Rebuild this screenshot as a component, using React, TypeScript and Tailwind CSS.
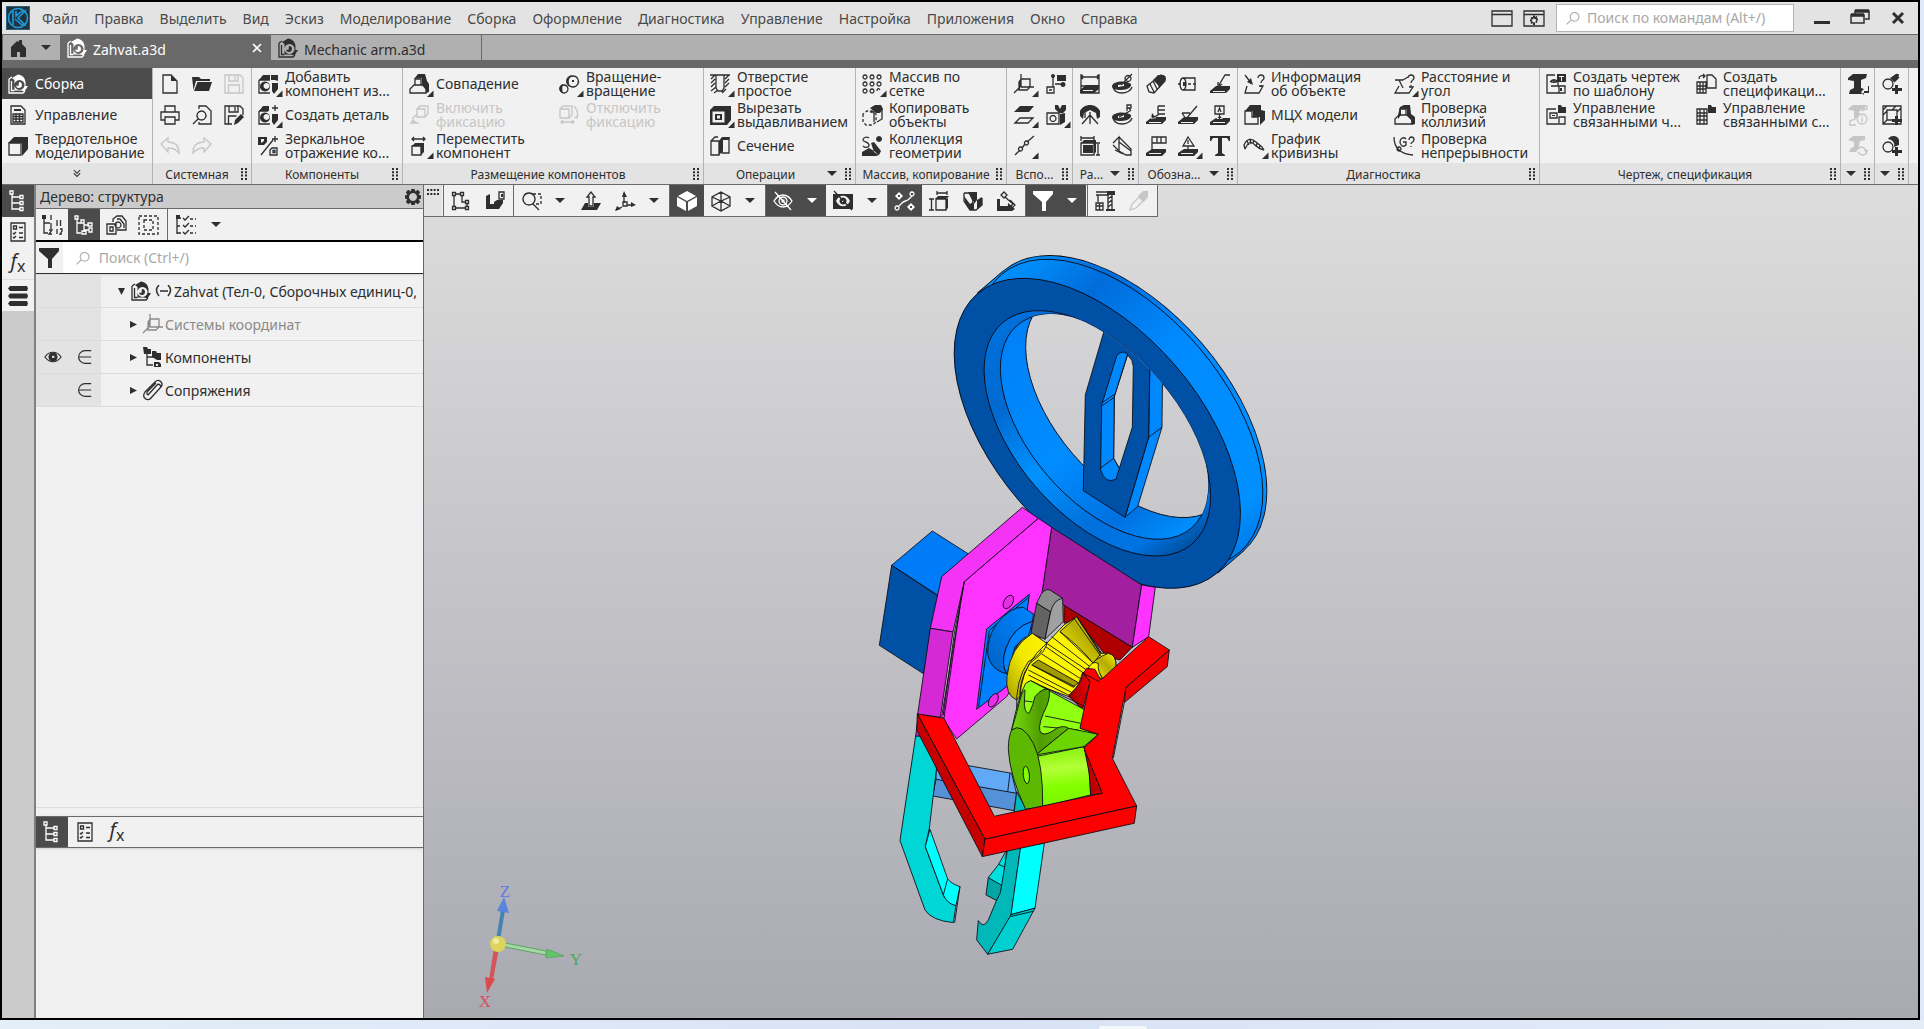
import type { ReactNode } from 'react'
import clsx from 'clsx'

type Glyph = { s?: string; f?: string; d?: string }

// Glyphs are drawn on a 20x20 grid: s = stroked, f = filled (even-odd), d = dashed
const glyphs = {
  assembly: {
    s: 'M1 5v14h14l2-2 M1 5l3-2 M3.500 7v9.500h3',
    f: 'M4 4l6-3.500c4 .5 7 3 7.500 7.500v4l2.500 0-3.500 5.500-3.500-1H6.500V6z M11.500 6a5 5 0 1 0 .01 0z M11 8a3 3 0 1 1-3 3.500l2.500.5z',
  },
  sheet: { s: 'M3 1h10l4 4v14H3z M5 9h10v8H5z M5 11.500h10M5 14h10M8 9v8M11.500 9v8', f: 'M6 4h7v2H6z' },
  solid: { s: 'M1 7h12v12H1z', f: 'M0 7l6-6h14v12l-6 7V7z' },
  doc: { s: 'M3 1h8l6 6v12H3z', f: 'M11 1l6 6h-6z' },
  open: { f: 'M0 3h7l2 2h9v2H4L1.500 16z M5.500 8H20l-3 9H2z' },
  save: { s: 'M1 1h15l3 3v15H1z M5 1v6h9V1 M11 2v4 M4.500 19v-8h11v8' },
  print: { s: 'M5 7V1h10v6 M5 15H1V7h18v8h-4 M5 12h10v7H5z' },
  preview: { s: 'M7 4V1h7l5 5v13H7v-2 M9.500 6a4.500 4.500 0 1 0 .01 0z M6 14l-5 5' },
  saveAs: { s: 'M8 19H1V1h15l3 3v6 M5 1v6h9V1 M11 2v4 M4.500 19v-8h8', f: 'M10 20l1-5 6-6 3 3-6 6z' },
  undo: { s: 'M1 8l7-6v4c7 0 11 4 11 11-3-4-6-5-11-5v4z' },
  redo: { s: 'M19 8l-7-6v4c-7 0-11 4-11 11 3-4 6-5 11-5v4z' },
  addPart: {
    s: 'M1 6h11 M1 6v13h11',
    f: 'M1 6l4-5h7v5z M13 1h7v6l-3-1h-4z M7 7.500a5 5 0 1 0 .01 0z M8.500 9a3 3 0 1 0 .01 0z M14 9h6v6l-4 5-2-3z',
  },
  newPart: {
    s: 'M1 6h9 M1 6v13h11 M17 0v6M14 3h6',
    f: 'M1 6l4-5h6v5z M7 7.500a5 5 0 1 0 .01 0z M8.500 9a3 3 0 1 0 .01 0z M14 9h6v6l-4 5-2-3z',
  },
  mirror: { s: 'M3 19L15 4 M17 0v6M14 3h6 M12 19v-5l2-2h5v7z M15 14.500h2v2h-2z', f: 'M0 1h9v5L6 9H0z M3 3v4l3-2V3z' },
  mate: { s: 'M1 19v-4l4-4h9l3 4v4z M6 11V5h6v6', f: 'M5 5l4-5h7l2 7 2 3v8l-3 1v-4l-4-4V4z' },
  fix: { s: 'M8 4h8v8H8z M8 4l3-3h8v8l-3 3 M8 9L4 13v2 M1 18h9 M2 18l2-3 3 3' },
  unfix: { s: 'M1 4h9v9H1z M1 4l3-3h9v9l-3 3 M15 1q5 5 3 11 M15 12l3 1 1-3 M2 17h13 M4 15l-2 2 2 2 M13 15l2 2-2 2' },
  move: { s: 'M3 3h13 M5 1L3 3l2 2 M14 1l2 2-2 2 M3 10h9v9H3z', f: 'M3 10l3-3h9v9l-3 3v-9z' },
  rotate: { s: 'M14 2a5.500 5.500 0 1 0 .01 0z M5 11a4 4 0 1 0 .01 0z', f: 'M13 1c-7 1-8 9-2 12-2-4-2-9 2-12z M4 10c-5 1-5 8 0 9-1-3-1-6 0-9z M13 6h2v2h-2z' },
  hole: { s: 'M0 1h20 M6 1v13l2 3h4l2-3V1 M1 5l4-4 M1 9l4-4 M1 13l4-4 M1 17l5-4 M4 19l4-3 M15 5l4-4 M15 9l4-4 M15 13l4-4 M12 19l4-4' },
  cut: { f: 'M0 5l4-4h17v14l-4 5H0z M2.500 6.500v11h12v-11z M5 9h7v6H5z M7 10.500v3h3v-3z' },
  section: { s: 'M1 5h8v14H1z M1 5l4-4h3 M12 3h7v14h-7z', f: 'M9 5l3-4h8l-1 3h-6v11l-4 4z' },
  pattern: { s: 'M3 1a2 2 0 1 0 .01 0z M10 1a2 2 0 1 0 .01 0z M17 1a2 2 0 1 0 .01 0z M3 8a2 2 0 1 0 .01 0z M10 8a2 2 0 1 0 .01 0z M17 8a2 2 0 1 0 .01 0z M3 15a2 2 0 1 0 .01 0z M10 15a2 2 0 1 0 .01 0z M15 17c0-3 2-3 3-1' },
  copy: { d: 'M1 9v8l3 3h6l4-3V9l-4-3H5z', s: 'M20 4v10l-5 3 M8 7h4v10', f: 'M8 3l5-3h6l2 4-3 4h-4z' },
  collect: { s: 'M7 2C4 0 1 2 1 4s6 2 6 5-4 3-6 1', f: 'M17 0a3 3 0 1 0 .01 0z M9 7l3-1 7 9-2 4-5-3z M0 16l7-4 5 3 5 4-3 1H0z' },
  plane: { s: 'M7 5h9v8l-3 3H5z M7 0v12L0 19 M7 13h13 M7 5l-2 3v8' },
  localCs: { s: 'M1 13h7v6H1z M7 1v12 M9 10h8 M3 16h3', f: 'M11 1h9v6h-9z M7 0a2 2 0 1 0 .01 0z M17 8a2.500 2.500 0 1 0 .01 0z' },
  parallel: { s: 'M1 18l5-5h13l-5 5z', f: 'M0 7l6-6h14l-5 6z' },
  camera: { s: 'M1 8h12v11H1z M7 10.500a3 3 0 1 0 .01 0z', f: 'M9 0h3l2 4 2-4h4v5l-3 3h-4L9 4z M14 9l5-1v9l-5 3z' },
  points: { s: 'M1 19l5-5 M8 12l3-4 M13 6l7-6 M6.500 11a2 2 0 1 0 .01 0z M12.500 5a2 2 0 1 0 .01 0z' },
  dim: { s: 'M1 0v19h18V0 M1 3h18 M3 1L1 3l2 2 M17 1l2 2-2 2 M1 12h12', f: 'M0 16l6-5h13v4l-5 4H0z M3 16v1h10v-1z' },
  dia: { s: 'M1 13c1 4 5 6 9 6s9-2 10-6 M16 1.500a3 3 0 1 0 .01 0z M9 11L20 0', f: 'M0 12c1-5 14-6 19-2 1 3-4 6-10 6-5 0-9-1-9-4z M6 11v2l6-1v-2z' },
  angle: { s: 'M2 19L10 10l8 9 M10 7v12 M2 6h3v7', f: 'M0 6C4-2 16-2 20 6v6l-3 2-1-6-6-3-6 3-1 6-3-3z' },
  radius: { s: 'M1 13c1 4 5 6 9 6s9-2 10-6 M7 12l11-6 M15 6V0h4v3h-4 M17 3l2 3', f: 'M0 12c1-5 14-6 19-2 1 3-4 6-10 6-5 0-9-1-9-4z M6 11v2l6-1v-2z' },
  dimBox: { s: 'M1 7h13v12H1z M1 0v5 M14 0v5 M1 2h13 M16 7h4 M18 8v11 M16 19h4 M7 12v4h5v-4', f: 'M1 7l3-3h12v12l-2 2V7z M3 9h10v8H3z' },
  leaderR: { s: 'M1 7l6-6v14L1 9 M7 1l12 12v6h-5L7 15 M7 6l12 9 M3 14l8 4' },
  thread: { s: 'M1 12l2 6 5 1L19 7l0-4-4-2z M4 10l4 8 M7 7l4 8', f: 'M7 6l5-5 6 0 2 4-7 9-1-3z' },
  axis: { s: 'M5 4h12v12H5 M5 4a3 6 0 1 0 .01 0z', d: 'M0 10h20', f: 'M5 8h3v4H5z' },
  leader: { s: 'M20 1h-5L9 11 M8 8v5l4-3', f: 'M0 17l6-5h14v3l-4 4H0z M3 17v1h12v-1z' },
  weld: { s: 'M12 1h7 M12 5h7 M12 9h7 M12 1v9L6 13', f: 'M0 17l6-5h14v3l-4 4H0z M3 17v1h12v-1z M5 14l1-6 4 5z' },
  rough: { s: 'M4 8l4 6 11-13 M4 8h8', f: 'M0 17l6-5h14v3l-4 4H0z M3 17v1h12v-1z' },
  datum: { s: 'M5 1h9v8H5z M9.500 9v6 M8 7l1.500-4L11 7', f: 'M0 17l6-4h14v3l-4 4H0z M3 17v1h12v-1z M6 14h7l-3-3z' },
  tolerance: { s: 'M6 1h14v6H6z M11 1v6 M15 1v6 M6 7v8', f: 'M0 17l6-4h14v3l-4 4H0z M3 17v1h12v-1z' },
  mark: { s: 'M10 1l6 9H5z M10 4v4 M10 10v4', f: 'M0 17l6-4h14v3l-4 4H0z M3 17v1h12v-1z' },
  text: { f: 'M0 0h20v5h-1l-2-3h-5v15l3 2v1H5v-1l3-2V2H3L1 5H0z' },
  info: { s: 'M1 1l6 8 M3 12L1 19h14l4-7h-4 M14 4c0-4 6-4 6 0 0 2-3 2-3 5 M17 11v2', f: 'M9 11L3 8l4-4z' },
  mass: { s: 'M1 6h7v6h6v7H1z', f: 'M1 6l5-6h11v5l4 1v9l-5 5v-8H9V6z' },
  curvature: { s: 'M1 13c4-8 6-8 10-4s5 4 9 5 M1 13l-1-4c3-7 8-7 12-3l6 5 2 3 M3 5l2 4 M6 3l1 5 M10 4l-1 4 M13 7l-1 4 M16 9l-1 4' },
  measure: { s: 'M1 6h8 M5 6l4 8 M9 6l5-3 M5 12L1 19h14l4-6h-4 M14 4c0-4 6-4 6 0 0 2-3 2-3 5 M17 11v2' },
  collide: { s: 'M1 19v-5l4-4h9l4 4v5z M6 10V4h6v6', f: 'M4 10l2-8 4-2h6l1 9 4 3v7l-3 1-1-5-4-4V4H7v6l-3 4z' },
  gcheck: { s: 'M0 1c0 10 6 17 19 18 M12 3C9 0 6 3 6 6s3 6 6 3V6H9 M15 4c0-4 5-4 5 0 0 2-3 2-3 4 M17 10v1 M5 11a2 2 0 1 0 .01 0z' },
  drawing: { s: 'M9 1H1v18h12 M13 12h6v7h-6z M4 8c2-3 6-3 8 0v4H5 M5 8h6 M8 5v4', f: 'M11 0h9v8h-9z M13 2v1h2v4h1V3h2V2z M14 14h2v3h-2z' },
  drawingCtl: { s: 'M10 4H1v15h18v-7h-6v6 M4 8h7v5H4z', f: 'M12 0h3l1 2h4v6h-8z M6 10h3v1H6z' },
  spec: { s: 'M11 1h5l4 4v9h-9z M1 8h9v11H1z M1 12h9 M1 15h9 M4 8v11 M7 8v11 M3 5c0-3 2-4 6-3 M7 0l2 2-2 2' },
  specCtl: { s: 'M1 4h10v15H1z M1 8h10 M1 11h10 M1 15h10 M4 4v15 M8 4v15', f: 'M12 0h3l1 2h4v6h-8z' },
  beam: { f: 'M0 4l5-4h14l-1 4-5 2v8l3 1v4l-3 1H1l1-4 4-2V7L0 6z M20 12v5h-4l0-2-3 3 3 3v-2h5v-7z' },
  beamInfo: { s: 'M1 5l4-4h14v3l-6 2 M7 6v8l-5 2v4h6 M14 9a5 5 0 1 0 .01 0z M14 13v4 M14 11v1', f: 'M0 4l5-4h12v4l-5 1-2 8H6V6z' },
  beamSync: { s: 'M9 14c2-4 6-4 9 0 M19 16c-2 4-6 4-9 0', f: 'M0 4l5-4h12v4l-5 1-2 8-2 3H1l2-4 3-1V6z M16 14h5l-3 3z' },
  addThread: { s: 'M6 5a5 5 0 1 0 .01 0z M10 5l5-5 M12 8l5-5', f: 'M8 4l6-4h3l-1 5-4 3z M13 11h3v3h4v3h-4v3h-3v-3h-3v-3h3z' },
  addHatch: { s: 'M1 1h18v18H1z M5 5h10v10H5z M1 5l4-4 M1 10l4-4 M1 19l4-4 M10 5l4-4 M15 7l4-4', f: 'M13 11h3v3h4v3h-4v3h-3v-3h-3v-3h3z' },
  addRing: { s: 'M6 6a5 5 0 1 0 .01 0z', f: 'M6 3c2-4 10-4 11 1v5l-5 2c1-4-1-7-6-8z M13 11h3v3h4v3h-4v3h-3v-3h-3v-3h3z' },
  tree: { s: 'M4 3v15h8 M4 6h8 M4 12h8 M12 4.500h3v3h-3z M12 10.500h3v3h-3z M12 16.500h3v3h-3z M2 0h3v3H2z' },
  props: { s: 'M3 1h14v18H3z M5.500 4h3v3h-3z M11 5.500h4 M5 11l1 1 2-2 M11 11h4 M5 15l1 1 2-2 M11 15.500h4' },
  menu: { f: 'M2 0h17l1 2.500-1 2.500H2L0 2.500z M2 7.500h17l1 2.500-1 2.500H2L0 10z M2 15h17l1 2.500-1 2.500H2l-2-2.500z' },
  treeNum: { s: 'M2 2v16h4 M2 8h6 M9 0v5 M15 5v6 M18.500 5v6 M15 14v5 M9 8v6 M7 15h3l-3 4h3 M18 14h2v2l-2 3h2', f: 'M0 0h4v4H0z' },
  treeComp: { s: 'M3 3v15h4 M3 8h4 M7 5h3v3H7z M8 16h4v3H8z M10 6v11 M10 10h5 M14 8h4v3h-4z M10 15h5 M15 13h3v4h-3z M1 1h3v3H1z' },
  parts: { s: 'M1 9h9v10H1z M4 12h3v4H4z M7 7V4l4-3h5l4 5v9h-9 M11 4h3l4 5v4 M12 7a3 3 0 1 0 .01 0z' },
  dashed: { d: 'M1 1h19v18H1z M6 5h9v10H6z' },
  checks: { s: 'M2 1v18 M2 3h4 M2 11h3 M2 18h4 M8 3l2 2 4-4 M8 10l2 2 4-4 M8 17l2 2 4-4', d: 'M15 4h6 M15 11h6 M15 18h6', f: 'M1 0h4v4H1z' },
  filter: { f: 'M0 0h20v3l-7 8v9h-4v-9L0 3z' },
  search: { s: 'M12 3a5.500 5.500 0 1 0 .01 0z M8 12l-6 6' },
  gear: { f: 'M8 0h4l1 3 3-2 3 3-2 3 3 1v4l-3 1 2 3-3 3-3-2-1 3H8l-1-3-3 2-3-3 2-3-3-1V8l3-1-2-3 3-3 3 2z M10 5a5 5 0 1 0 .01 0z' },
  comps: { s: 'M4 5v13h6 M4 10h6', f: 'M0 0h4l1 2h3v5H1z M9 4h4l1 2h4v7h-4l-5-3z M11 15h5l2 2v3h-7z M13 17v2h2v-2z' },
  clip: { s: 'M5 15L14 5c2-2 5 1 3 3L8 18c-3 4-10 0-6-6L12 2c4-4 9 1 6 5 M5 15c-2-1-1-3 0-4l8-8' },
  profile: { s: 'M3 5v10 M5 17h9 M16 15v-2 M14 11h-3V5 M9 3H5 M1.500 1.500h3v3h-3z M9.500 1.500h3v3h-3z M14.500 9.500h3v3h-3z M1.500 15.500h3v3h-3z M14.500 15.500h3v3h-3z' },
  sketch: { s: 'M14 1h5v7h-5z', f: 'M1 5l4-2v10h4v-2l3-2h6v3l-4 6H1z M16 3h2v3h-2z' },
  zoomArea: { s: 'M8 2a6 6 0 1 0 .01 0z M12 13l6 6', d: 'M12 3h8v10h-6' },
  normal: { s: 'M10 1L6 6h2v9h4V6h2z', f: 'M0 19l4-7h3v4h6v-4h7l-4 7z' },
  csys: { s: 'M9 12V2 M12 14h7 M7 16l-6 3 M8 11h4v4H8z', f: 'M9 0l3 6H7z M21 14l-5-3v5z M0 20l2-5 4 3z' },
  shaded: { f: 'M10 0l9 5-9 5-9-5z M0 6l9 5v9l-9-5z M20 6l-9 5v9l9-5z' },
  wire: { s: 'M10 1l9 5v9l-9 5-9-5V6z M10 1v9 M1 6l9 4 9-4 M10 10v10 M1 15l9-5 9 5' },
  hide: { s: 'M1 10c5-8 13-8 18 0-5 8-13 8-18 0z M10 6a4 4 0 1 0 .01 0z M2 1l16 18', f: 'M8.500 8.500h3v3h-3z' },
  hideBox: { s: 'M1 0l18 19', f: 'M0 3h20v15H0z M3 10c3 7 11 7 14 0-3-7-11-7-14 0z M10 6.500a3.500 3.500 0 1 0 .01 0z M9 9h2v2H9z' },
  link: { s: 'M4 15l3-3c3-3 4-1 7-4l3-3 M17 1a2 2 0 1 0 .01 0z M2 15a2 2 0 1 0 .01 0z', f: 'M4 1l4 4-4 4-4-4z M3 4v2h2V4z M16 12l4 4-4 4-4-4z M15 15v2h2v-2z' },
  dimFrame: { s: 'M7 8h10v11H7z M8 0v4 M18 0v4 M8 2h10 M0 8h5 M0 19h5 M2.500 8v11', f: 'M17 8l2-2v11l-2 2z M6 8l3-3h11l-2 3z' },
  boxes: { s: 'M1 2h9v11 M1 2v8l6 9h6l6-5V7', f: 'M5 1h9v8l-3 4zM1 5l6 8 4-3v9H7l-5-7z M14 9l5-3v8l-5 4z' },
  tools: { s: 'M4 4l3-3 3 3-3 3z M8 6l8 7-3 3 M13 9l5 5-3 3-4-4', f: 'M0 8h3v7h8v-3l7 6-3 2H0z' },
  crane: { s: 'M1 1h19 M1 4h13 M3 4v7 M1 12h7v7H1z M1 15h7 M4.500 12v7 M13 4v15 M17 1v18 M13 8l4-3 M13 12l4-3 M13 16l4-3', f: 'M11 18h9v2h-9z M12 0h8v4h-8z' },
  dropper: { s: 'M1 19l2-6 7-7 4 4-7 7z', f: 'M9 5l5-5h5v6l-4 5z' },
  layout: { s: 'M0 3h20v15H0z M0 6.500h20' },
  layoutGear: { s: 'M0 3h20v15H0z M0 6.500h20', f: 'M9 7.500h2v1.500l1.500-1 1 1-1 1.500H14v2h-1.500l1 1.500-1 1-1.500-1V17H9v-2l-1.500 1-1-1 1-1.500H6v-2h1.500l-1-1.500 1-1L9 9z M10 10.500a2 2 0 1 0 .01 0z' },
  home: { f: 'M2 9l6-6 2 1V2h3v4l4 4v9h-6v-5H8v5H2z' },
  double: { s: 'M6 5l4 4 4-4 M6 9l4 4 4-4' },
  eye: { s: 'M1 10c5-7 13-7 18 0-5 7-13 7-18 0z', f: 'M10 5a5 5 0 1 0 .01 0z M9 8.500h2.500v2.500H9z' },
  member: { s: 'M18 3h-7a7 7 0 0 0 0 14h7 M4 10h14' },
} satisfies Record<string, Glyph>

type IconName = keyof typeof glyphs

function Icon({ name, more, className = 'size-5' }: { name: IconName; more?: boolean; className?: string }) {
  const glyph: Glyph = glyphs[name]
  return (
    <svg className={clsx('shrink-0 overflow-visible', className)} viewBox="0 0 20 20" fill="none" stroke="currentColor" strokeWidth="1.3" aria-hidden="true">
      {glyph.s && <path d={glyph.s} />}
      {glyph.d && <path d={glyph.d} strokeDasharray="3 2" />}
      {glyph.f && <path d={glyph.f} fill="currentColor" fillRule="evenodd" stroke="none" />}
      {more && <path d="M24.500 16.500v6.500H18z" fill="currentColor" stroke="none" />}
    </svg>
  )
}

function Arrow({ className }: { className?: string }) {
  return <span className={clsx('inline-block h-0 w-0 border-x-5 border-t-5 border-x-transparent border-t-current', className)} />
}

function Grip() {
  return (
    <svg className="h-3 w-[6px] shrink-0" viewBox="0 0 6 12" fill="currentColor" aria-hidden="true">
      <path d="M0 0h2v2H0zM4 0h2v2H4zM0 3.300h2v2H0zM4 3.300h2v2H4zM0 6.600h2v2H0zM4 6.600h2v2H4zM0 10h2v2H0zM4 10h2v2H4z" />
    </svg>
  )
}

type Tool = { icon: IconName; label?: string; more?: boolean; off?: boolean }

const menu = ['Файл', 'Правка', 'Выделить', 'Вид', 'Эскиз', 'Моделирование', 'Сборка', 'Оформление', 'Диагностика', 'Управление', 'Настройка', 'Приложения', 'Окно', 'Справка']

const modes: Tool[] = [
  { icon: 'assembly', label: 'Сборка' },
  { icon: 'sheet', label: 'Управление' },
  { icon: 'solid', label: 'Твердотельное\nмоделирование' },
]

type Group = { title: string; width: string; tools: (Tool | null)[]; arrow?: boolean; iconsOnly?: boolean }

// Tools fill each group column by column, three to a column
const groups: Group[] = [
  {
    title: 'Системная',
    width: 'w-[99px]',
    iconsOnly: true,
    tools: [
      { icon: 'doc', label: 'Создать' }, { icon: 'print', label: 'Печать' }, { icon: 'undo', label: 'Отменить', off: true },
      { icon: 'open', label: 'Открыть' }, { icon: 'preview', label: 'Просмотр' }, { icon: 'redo', label: 'Повторить', off: true },
      { icon: 'save', label: 'Сохранить', off: true }, { icon: 'saveAs', label: 'Сохранить как' },
    ],
  },
  {
    title: 'Компоненты',
    width: 'w-[151px]',
    tools: [
      { icon: 'addPart', label: 'Добавить\nкомпонент из...', more: true },
      { icon: 'newPart', label: 'Создать деталь', more: true },
      { icon: 'mirror', label: 'Зеркальное\nотражение ко...' },
    ],
  },
  {
    title: 'Размещение компонентов',
    width: 'w-[301px]',
    tools: [
      { icon: 'mate', label: 'Совпадение', more: true },
      { icon: 'fix', label: 'Включить\nфиксацию', off: true },
      { icon: 'move', label: 'Переместить\nкомпонент', more: true },
      { icon: 'rotate', label: 'Вращение-\nвращение', more: true },
      { icon: 'unfix', label: 'Отключить\nфиксацию', off: true },
    ],
  },
  {
    title: 'Операции',
    width: 'w-[152px]',
    arrow: true,
    tools: [
      { icon: 'hole', label: 'Отверстие\nпростое', more: true },
      { icon: 'cut', label: 'Вырезать\nвыдавливанием', more: true },
      { icon: 'section', label: 'Сечение' },
    ],
  },
  {
    title: 'Массив, копирование',
    width: 'w-[151px]',
    tools: [
      { icon: 'pattern', label: 'Массив по\nсетке', more: true },
      { icon: 'copy', label: 'Копировать\nобъекты' },
      { icon: 'collect', label: 'Коллекция\nгеометрии' },
    ],
  },
  {
    title: 'Вспо...',
    width: 'w-[66px]',
    iconsOnly: true,
    tools: [
      { icon: 'plane', more: true }, { icon: 'parallel', more: true }, { icon: 'points', more: true },
      { icon: 'localCs' }, { icon: 'camera', more: true },
    ],
  },
  {
    title: 'Ра...',
    width: 'w-[66px]',
    arrow: true,
    iconsOnly: true,
    tools: [{ icon: 'dim' }, { icon: 'angle' }, { icon: 'dimBox' }, { icon: 'dia' }, { icon: 'radius' }, { icon: 'leaderR' }],
  },
  {
    title: 'Обозна...',
    width: 'w-[99px]',
    arrow: true,
    iconsOnly: true,
    tools: [
      { icon: 'thread' }, { icon: 'weld' }, { icon: 'tolerance' },
      { icon: 'axis' }, { icon: 'rough' }, { icon: 'mark', more: true },
      { icon: 'leader' }, { icon: 'datum' }, { icon: 'text' },
    ],
  },
  {
    title: 'Диагностика',
    width: 'w-[302px]',
    tools: [
      { icon: 'info', label: 'Информация\nоб объекте' },
      { icon: 'mass', label: 'МЦХ модели' },
      { icon: 'curvature', label: 'График\nкривизны', more: true },
      { icon: 'measure', label: 'Расстояние и\nугол', more: true },
      { icon: 'collide', label: 'Проверка\nколлизий' },
      { icon: 'gcheck', label: 'Проверка\nнепрерывности' },
    ],
  },
  {
    title: 'Чертеж, спецификация',
    width: 'w-[301px]',
    tools: [
      { icon: 'drawing', label: 'Создать чертеж\nпо шаблону' },
      { icon: 'drawingCtl', label: 'Управление\nсвязанными ч...' },
      null,
      { icon: 'spec', label: 'Создать\nспецификаци...' },
      { icon: 'specCtl', label: 'Управление\nсвязанными с...' },
    ],
  },
  { title: '', width: 'w-[34px]', arrow: true, iconsOnly: true, tools: [{ icon: 'beam' }, { icon: 'beamInfo', off: true }, { icon: 'beamSync', off: true }] },
  { title: '', width: 'w-[34px]', arrow: true, iconsOnly: true, tools: [{ icon: 'addThread' }, { icon: 'addHatch' }, { icon: 'addRing' }] },
]

function RibbonGroup({ group }: { group: Group }) {
  return (
    <section className={clsx('flex shrink-0 flex-col border-r border-[#b4b4b4]', group.width)}>
      <div className={clsx('grid h-[95px] grid-flow-col grid-rows-3 justify-start pb-[2px]', group.iconsOnly ? 'auto-cols-[32px] pl-px' : 'auto-cols-[150px]')}>
        {group.tools.map((tool, index) =>
          tool ? (
            <button
              key={index}
              type="button"
              disabled={tool.off}
              aria-label={tool.label?.replace('\n', ' ') ?? tool.icon}
              className={clsx('flex items-center', group.iconsOnly ? 'justify-center' : 'gap-[7px] pl-[6px]', tool.off ? 'text-[#c6c6c6]' : 'text-[#2e2e2e]')}
            >
              <Icon name={tool.icon} more={tool.more} />
              {!group.iconsOnly && <span className="text-left leading-[14px] whitespace-pre">{tool.label}</span>}
            </button>
          ) : (
            <span key={index} />
          ),
        )}
      </div>
      <footer className="flex flex-1 items-center bg-[#e3e3e3] pr-1 text-xs">
        <span className="flex-1 pt-[2px] text-center whitespace-nowrap">{group.title}</span>
        {group.arrow && <Arrow className={group.title ? 'mr-2' : 'mr-2 -ml-4'} />}
        <Grip />
      </footer>
    </section>
  )
}

function TitleBar() {
  return (
    <header className="flex h-[33px] items-center border-b border-[#6a6a6a] bg-[#e3e3e3] pl-1">
      <svg className="size-6" viewBox="0 0 24 24" fill="none" stroke="#1e9be0" strokeWidth="1.6" aria-hidden="true">
        <path d="M0 0h24v24H0z" fill="#20323c" stroke="#2f6e90" />
        <circle cx="12" cy="12" r="9.500" />
        <path d="M7 5v14 M10 5v5l6-5h3l-7 7 7 7h-3l-7-6" />
      </svg>
      <nav className="flex gap-4 pl-3">
        {menu.map((item) => (
          <button key={item} type="button" className="pt-px whitespace-nowrap text-[#4a4a4a]">
            {item}
          </button>
        ))}
      </nav>
      <div className="ml-auto flex items-center">
        <button type="button" aria-label="Окна" className="mr-3">
          <Icon name="layout" />
        </button>
        <button type="button" aria-label="Настройка окна" className="mr-3">
          <Icon name="layoutGear" />
        </button>
        <label className="flex h-7 w-[238px] items-center gap-1.5 border border-[#b4b4b4] bg-white pl-2 text-[#a8a8a8]">
          <Icon name="search" className="size-4" />
          <input className="w-full outline-none placeholder:text-[#a8a8a8]" placeholder="Поиск по командам (Alt+/)" aria-label="Поиск по командам" />
        </label>
        <button type="button" aria-label="Свернуть" className="ml-5 h-5 w-4">
          <span className="mt-2 block h-[3px] bg-[#2e2e2e]" />
        </button>
        <button type="button" aria-label="Развернуть" className="ml-5">
          <svg className="size-5" viewBox="0 0 20 20" fill="none" stroke="#2e2e2e" strokeWidth="1.500">
            <path d="M1 7h13v8H1z M5 6V3h14v8h-4" />
            <path d="M1 7h13M5 3h14" strokeWidth="3.500" />
          </svg>
        </button>
        <button type="button" aria-label="Закрыть" className="mr-3 ml-5">
          <svg className="size-4" viewBox="0 0 16 16" stroke="#2e2e2e" strokeWidth="3">
            <path d="M3 3l10 10M13 3L3 13" />
          </svg>
        </button>
      </div>
    </header>
  )
}

function DocumentTabs() {
  return (
    <div className="flex h-[33px] items-start border-b-8 border-[#696969] bg-[#b0b0b0]">
      <button type="button" aria-label="Начальная страница" className="flex h-[25px] w-[58px] items-center gap-3 border-l border-[#696969] pl-[6px]">
        <Icon name="home" />
        <Arrow />
      </button>
      <div className="flex h-[25px] w-[211px] items-center bg-[#696969] pr-2 pl-[7px] text-white">
        <button type="button" className="flex flex-1 items-center gap-[6px]">
          <Icon name="assembly" />
          <span className="pt-1">Zahvat.a3d</span>
        </button>
        <button type="button" aria-label="Закрыть вкладку">
          <svg className="size-3" viewBox="0 0 12 12" stroke="currentColor" strokeWidth="1.600">
            <path d="M2 2l8 8M10 2l-8 8" />
          </svg>
        </button>
      </div>
      <button type="button" className="flex h-[25px] w-[211px] items-center gap-[6px] border-r border-[#696969] pl-[7px]">
        <Icon name="assembly" />
        <span className="pt-1">Mechanic arm.a3d</span>
      </button>
    </div>
  )
}

function Ribbon() {
  return (
    <div className="flex h-[117px] overflow-hidden border-b border-[#6a6a6a] bg-[#f1f1f1]">
      <section className="flex w-[151px] shrink-0 flex-col border-r border-[#b4b4b4]">
        <div className="grid h-[95px] grid-rows-3 pb-[2px]">
          {modes.map((mode, index) => (
            <button
              key={mode.label}
              type="button"
              className={clsx('flex items-center gap-[7px] pl-[6px] text-left', index === 0 && 'bg-[#4b4b4b] text-white')}
            >
              <Icon name={mode.icon} />
              <span className="leading-[14px] whitespace-pre">{mode.label}</span>
            </button>
          ))}
        </div>
        <button type="button" aria-label="Ещё наборы" className="flex flex-1 items-center justify-center bg-[#e3e3e3]">
          <Icon name="double" className="size-4" />
        </button>
      </section>
      {groups.map((group, index) => (
        <RibbonGroup key={index} group={group} />
      ))}
      <div className="flex flex-1 items-end">
        <div className="h-[21px] flex-1 bg-[#e3e3e3]" />
      </div>
    </div>
  )
}

function FxLabel() {
  return (
    <span className="pb-1 text-[20px] leading-5 italic">
      f<sub className="text-[16px] not-italic">x</sub>
    </span>
  )
}

function SideStrip() {
  return (
    <nav className="flex w-[34px] shrink-0 flex-col border-r-2 border-[#808080] bg-[#cbcbcb]">
      <button type="button" aria-label="Дерево" className="flex h-8 items-center justify-center bg-[#4b4b4b] text-white">
        <Icon name="tree" />
      </button>
      <button type="button" aria-label="Параметры" className="flex h-[30px] items-center justify-center bg-[#f1f1f1]">
        <Icon name="props" />
      </button>
      <button type="button" aria-label="Переменные" className="flex h-8 items-center justify-center bg-[#f1f1f1]">
        <FxLabel />
      </button>
      <button type="button" aria-label="Меню" className="flex h-8 items-center justify-center border-t border-[#e0e0e0] bg-[#f1f1f1]">
        <Icon name="menu" />
      </button>
    </nav>
  )
}

type Row = { icon: IconName; text: string; root?: boolean; muted?: boolean; eye?: boolean; member?: boolean }

const rows: Row[] = [
  { icon: 'assembly', text: 'Zahvat (Тел-0, Сборочных единиц-0,', root: true },
  { icon: 'plane', text: 'Системы координат', muted: true },
  { icon: 'comps', text: 'Компоненты', eye: true, member: true },
  { icon: 'clip', text: 'Сопряжения', member: true },
]

function TreePanel() {
  return (
    <aside className="flex w-[388px] shrink-0 flex-col border-r border-[#6a6a6a] bg-[#f1f1f1]">
      <header className="flex h-6 items-center justify-between border-b border-[#6a6a6a] bg-[#cbcbcb] pr-[2px] pl-1">
        <h2>Дерево: структура</h2>
        <button type="button" aria-label="Настройка дерева">
          <Icon name="gear" className="size-4" />
        </button>
      </header>
      <div className="flex h-[33px] items-stretch border-b-2 border-black">
        {(['treeNum', 'treeComp', 'parts', 'dashed'] as const).map((name) => (
          <button key={name} type="button" aria-label={name} className={clsx('flex w-8 items-center justify-center', name === 'treeComp' && 'bg-[#4b4b4b] text-white')}>
            <Icon name={name} />
          </button>
        ))}
        <button type="button" aria-label="Состав дерева" className="ml-[3px] flex items-center gap-4 border-l border-[#6a6a6a] pl-[7px]">
          <Icon name="checks" />
          <Arrow />
        </button>
      </div>
      <label className="flex h-8 items-center border-b border-[#2e2e2e] bg-white text-[#a8a8a8] shadow-sm">
        <span className="flex h-full w-8 items-center justify-center bg-[#f1f1f1] text-[#2e2e2e]">
          <Icon name="filter" />
        </span>
        <Icon name="search" className="mr-2 ml-3 size-4" />
        <input className="w-full pt-px outline-none placeholder:text-[#a8a8a8]" placeholder="Поиск (Ctrl+/)" aria-label="Поиск в дереве" />
      </label>
      <ul className="pt-px">
        {rows.map((row) => (
          <li key={row.text} className="flex h-[33px] border-b border-[#dcdcdc]">
            <span className="flex w-[65px] shrink-0 items-center justify-between bg-[#e3e3e3] pr-2 pl-2">
              <span>{row.eye && <Icon name="eye" className="size-[18px]" />}</span>
              <span>{row.member && <Icon name="member" className="size-[18px]" />}</span>
            </span>
            <span className={clsx('flex min-w-0 items-center whitespace-nowrap', row.root ? 'pl-[17px]' : 'pl-[29px]')}>
              <svg className="mr-[6px] size-[7px] shrink-0" viewBox="0 0 7 7" fill="currentColor" aria-hidden="true">
                <path d={row.root ? 'M0 0h7L3.500 7z' : 'M0 0l7 3.500L0 7z'} />
              </svg>
              <Icon name={row.icon} className={clsx('size-5', row.muted && 'text-[#8a8a8a]')} />
              {row.root && (
                <svg className="ml-1 h-3 w-[17px] shrink-0" viewBox="0 0 17 12" fill="none" stroke="currentColor" strokeWidth="1.500" aria-hidden="true">
                  <path d="M4 0q-5 5 0 11M13 0q5 5 0 11M5 6h8" />
                </svg>
              )}
              <span className={clsx('pt-px pl-[2px]', row.muted && 'text-[#8a8a8a]')}>{row.text}</span>
            </span>
          </li>
        ))}
      </ul>
      <div className="mt-auto border-t border-[#dcdcdc] pt-2">
        <div className="flex h-8 items-stretch border-y border-[#6a6a6a] shadow-sm">
          <button type="button" aria-label="Дерево" className="flex w-8 items-center justify-center bg-[#4b4b4b] text-white">
            <Icon name="tree" />
          </button>
          <button type="button" aria-label="Параметры" className="flex w-[33px] items-center justify-center">
            <Icon name="props" />
          </button>
          <button type="button" aria-label="Переменные" className="flex w-8 items-center justify-center">
            <FxLabel />
          </button>
        </div>
        <div className="h-[170px]" />
      </div>
    </aside>
  )
}

function ViewButton({ name, arrow, dark, off }: { name: IconName; arrow?: boolean; dark?: boolean; off?: boolean }) {
  return (
    <button
      type="button"
      aria-label={name}
      className={clsx('flex items-center gap-[14px] pl-[7px]', arrow ? 'w-[60px]' : 'w-[34px]', dark && 'bg-[#4b4b4b] text-white', off && 'text-[#c6c6c6]')}
    >
      <Icon name={name} />
      {arrow && <Arrow />}
    </button>
  )
}

function ViewGroup({ children }: { children: ReactNode }) {
  return <div className="flex border-r border-[#6a6a6a] pr-px">{children}</div>
}

function ViewToolbar() {
  return (
    <div className="relative flex h-8 w-max border-b border-[#6a6a6a] bg-[#f1f1f1]">
      <ViewGroup>
        <span className="flex w-[18px] justify-center bg-[#e3e3e3] pt-1">
          <svg className="h-[6px] w-3" viewBox="0 0 12 6" fill="currentColor" aria-hidden="true">
            <path d="M0 0h2v2H0zM3.300 0h2v2h-2zM6.600 0h2v2h-2zM10 0h2v2h-2zM0 4h2v2H0zM3.300 4h2v2h-2zM6.600 4h2v2h-2zM10 4h2v2h-2z" />
          </svg>
        </span>
      </ViewGroup>
      <ViewGroup>
        <ViewButton name="profile" />
        <ViewButton name="sketch" />
      </ViewGroup>
      <ViewGroup>
        <ViewButton name="zoomArea" arrow />
        <ViewButton name="normal" />
        <ViewButton name="csys" arrow />
      </ViewGroup>
      <ViewGroup>
        <ViewButton name="shaded" dark />
        <ViewButton name="wire" arrow />
      </ViewGroup>
      <ViewGroup>
        <ViewButton name="hide" arrow dark />
        <ViewButton name="hideBox" arrow />
      </ViewGroup>
      <ViewGroup>
        <ViewButton name="link" dark />
        <ViewButton name="dimFrame" />
        <ViewButton name="boxes" />
        <ViewButton name="tools" />
      </ViewGroup>
      <ViewGroup>
        <ViewButton name="filter" arrow dark />
      </ViewGroup>
      <ViewGroup>
        <ViewButton name="crane" />
        <ViewButton name="dropper" off />
      </ViewGroup>
    </div>
  )
}

const frontFace = 'translate(712 580) rotate(49.400)'
const backFace = 'translate(790 513) rotate(49.400)'
const boreFace = 'translate(733 560) rotate(49.400)'
const backBore = 'translate(809 495) rotate(49.400)'

function Handwheel() {
  return (
    <g>
      <clipPath id="body">
        <ellipse rx="552" ry="310" transform={backFace} />
        <ellipse rx="552" ry="310" transform={frontFace} />
        <path d="M352 161L430 94 1150 932 1072 999z" />
      </clipPath>
      <clipPath id="lip">
        <ellipse rx="437" ry="245" transform={frontFace} />
      </clipPath>
      <clipPath id="bore">
        <ellipse rx="401" ry="225" transform={boreFace} />
      </clipPath>
      <mask id="hole" maskUnits="userSpaceOnUse" x="0" y="0" width="1400" height="1200">
        <path d="M0 0h1400v1200H0z" fill="#fff" stroke="none" />
        <g clipPath="url(#lip)">
          <g clipPath="url(#bore)">
            <ellipse rx="401" ry="225" transform={backBore} fill="#000" stroke="none" />
          </g>
        </g>
      </mask>
      <g mask="url(#hole)">
        <ellipse rx="552" ry="310" transform={backFace} strokeWidth="5" />
        <path d="M352 161L430 94M1150 932L1072 999" strokeWidth="5" />
        <g clipPath="url(#body)">
          <path d="M0 0h1400v1200H0z" fill="url(#rim)" stroke="none" />
          <ellipse rx="549" ry="307" transform="translate(782 520) rotate(49.400)" />
        </g>
        <ellipse rx="552" ry="310" transform={frontFace} fill="#0050a5" />
        <g clipPath="url(#lip)">
          <path d="M0 0h1400v1200H0z" fill="url(#groove)" stroke="none" />
          <g clipPath="url(#bore)">
            <path d="M0 0h1400v1200H0z" fill="url(#boreFill)" stroke="none" />
          </g>
          <ellipse rx="401" ry="225" transform={boreFace} />
        </g>
        <ellipse rx="437" ry="245" transform={frontFace} />
      </g>
      <g clipPath="url(#lip)">
        <g clipPath="url(#bore)">
          <ellipse rx="401" ry="225" transform={backBore} />
        </g>
        <path d="M870 360L908 380 906 562 833 800 795 832 866 592z" fill="#0088ff" />
        <path d="M866 592L906 562" />
        <path d="M742 240L870 340 866 592 795 832 670 752 676 465z M803 345Q820 360 820 380L817 562 778 685 761 655 763 470z" fill="#0050a5" fillRule="evenodd" />
        <path d="M725 495L770 348Q785 328 803 342L763 470 761 655 778 685 768 718Q735 733 722 690z" fill="#0088ff" />
        <path d="M727 488L763 463M727 497L763 472M722 684L761 655" />
      </g>
    </g>
  )
}

function Bracket() {
  return (
    <g transform="translate(0 780)">
      <path d="M95 196L217 93 330 165 240 290z" fill="#007cf8" />
      <path d="M95 196L240 292 190 521 58 436z" fill="#0050a5" />
      <path d="M575 82L845 255 817 442 610 315 547 272z" fill="#a2209f" />
      <path d="M845 255L886 262 866 410 817 442z" fill="#ff33ff" />
      <path d="M535 55L575 82 547 272 540 420 440 590 290 717 245 650 313 245z" fill="#ff33ff" />
      <path d="M487 22L535 55 313 245 279 396 211 385 245 230z" fill="#f433f6" />
      <path d="M211 385L279 396 241 652 173 643z" fill="#d32ad6" />
      <path d="M313 245L283 400 250 645M300 320L252 655" />
      <path d="M612 316L817 442 780 480 740 470 650 358 612 370z" fill="#ae0000" />
      <path d="M350 628L380 387 508 283 500 345 520 400 440 560z" fill="#0080ff" />
      <path d="M387 392L506 292M388 392L356 620" />
      <path d="M383 460Q382 410 410 372 450 320 490 322L520 342 518 364Q460 380 438 445 422 490 440 521L425 517Q388 500 383 460z" fill="url(#disc)" />
      <path d="M518 364Q460 380 438 445 422 490 440 521L450 495 465 440 505 408z" fill="#0084ff" />
      <ellipse rx="13" ry="22" transform="translate(445 306) rotate(30)" fill="#e62ee8" />
      <ellipse rx="12" ry="22" transform="translate(400 601) rotate(30)" fill="#e62ee8" />
      <path d="M508 407Q468 420 463 465L475 470 520 410z" fill="#6c6c6c" />
      <path d="M535 300Q550 262 570 270L608 295 572 336 530 310z" fill="#8c8c8c" />
      <path d="M530 310L572 336 555 418 513 400z" fill="#636363" />
      <path d="M572 336Q580 300 608 295L610 365 555 418z" fill="#a0a0a0" />
    </g>
  )
}

function BevelGears() {
  return (
    <g transform="translate(0 780)">
      <path d="M517 400Q450 440 441 530 435 585 470 600L490 580 560 430z" fill="url(#yellow)" />
      <path d="M560 430L612 375 650 350 722 460 745 460Q770 465 768 500L730 540 700 515 668 518 640 595 505 545 480 600Q480 520 530 460z" fill="#fbf500" />
      <path d="M600 395Q660 440 700 490L722 462 650 350z" fill="url(#tooth)" />
      <path d="M515 495L640 562 655 548 535 480z" fill="#a09a00" />
      <path d="M480 610Q474 540 510 490 565 450 560 425M470 630Q466 540 505 485 535 470 545 450M560 430L680 510M557 440L672 520M545 462L660 535M505 510L640 580M505 525L635 590M520 497L645 560M575 410L690 500M600 395L700 490M640 352L722 468M650 350L725 460" />
      <path d="M690 500Q705 475 745 460 770 465 768 500L730 540Q712 500 690 500z" fill="url(#tooth)" />
      <path d="M682 510Q695 480 715 490 712 515 730 540z" fill="#fff200" />
      <path d="M668 518Q670 545 625 588L668 628 690 545z" fill="url(#hub)" />
      <g transform="translate(0 540)">
        <path d="M455 150Q475 50 497 10L512 2 675 90 662 145 715 163 672 200 548 262z" fill="#90ff10" />
        <path d="M528 230L672 200Q690 260 692 345L548 380 540 300z" fill="url(#green)" />
        <path d="M555 108L662 130M550 140L655 150M512 2L675 80" />
        <path d="M455 150Q470 100 480 60 488 30 495 30L493 75Q497 105 508 98 520 75 525 50 550 20 568 30 572 60 550 100 530 150 545 160 560 168 590 145 612 135 626 145L528 225z" fill="url(#fork)" />
        <path d="M495 63L518 66" />
        <path d="M626 145L715 163 672 200 528 225z" fill="#6cd400" />
        <path d="M455 150Q485 125 520 190 550 250 548 380L497 388Q450 290 445 210 445 170 455 150z" fill="#5cb800" />
        <ellipse rx="9" ry="26" transform="translate(499 285) rotate(-6)" fill="#84ff00" />
      </g>
    </g>
  )
}

function Gripper() {
  return (
    <g transform="translate(0 1320)">
      <path d="M228 240L455 280 470 342 228 300z" fill="#62a9f5" />
      <path d="M450 280L443 337" />
      <path d="M228 298L470 340 462 392 218 348z" fill="#5591d6" />
      <path d="M470 335L500 390 462 400z" fill="#00b8b8" />
      <path d="M167 168L190 168 230 262 208 445 196 500 252 650Q268 672 288 677L280 728Q215 722 195 690L120 482z" fill="#00d6d6" />
      <path d="M172 130L190 168H167z" fill="#d32ad6" />
      <path d="M210 448L263 597Q275 612 300 620L288 677Q262 672 250 645L196 500z" fill="#00ffff" />
      <path d="M263 597L250 645M300 620L284 728" />
      <path d="M440 510L416 553 385 593 428 640z" fill="#00e0e0" />
      <path d="M416 553L435 562M385 593L428 618 420 667 378 645z" fill="#00a5a5" />
      <path d="M442 510L482 500 453 708 383 823 350 780 355 722Q370 748 385 720L408 665Q425 640 426 610z" fill="#00b8b8" />
      <path d="M482 500L553 490 525 685 453 704z" fill="#00ffff" />
      <path d="M453 704L525 685 520 694 458 808 383 823 450 710z" fill="#00d0d0" />
      <path d="M450 710L520 694" />
    </g>
  )
}

function RedFrame() {
  return (
    <g transform="translate(0 780)">
      <path d="M928 450L922 500 793 608 798 562z" fill="#f00000" />
      <path d="M672 740L727 880 692 886 688 820z" fill="#c00000" />
      <path
        d="M722 540L866 410 928 450 798 562 757 775 830 918 375 1018 172 642 252 655 403 949 727 880 672 745 715 703 660 685 690 545 670 520 680 505 705 508z"
        fill="#f00"
      />
      <path d="M172 642L375 1018 367 1070 170 690z" fill="#c40000" />
      <path d="M375 1018L830 918 823 970 367 1070z" fill="#fa0000" />
      <path d="M793 608L760 775M670 520L718 545" />
    </g>
  )
}

function AxisTriad() {
  return (
    <g fontFamily="'Liberation Serif', serif" fontSize="17" textAnchor="middle">
      <path d="M496 940L501 910 505 910 500 941z" fill="#4682b4" />
      <path d="M504 897L509 913 497 911z" fill="#5b84dc" />
      <path d="M505 943L546 951V955L505 947z" fill="#a4d8a4" stroke="#4c9a50" strokeWidth=".8" />
      <path d="M564 956L547 949 546 958z" fill="#62c468" stroke="#4c9a50" strokeWidth=".6" />
      <path d="M494 948L499 948 493 980 489 980z" fill="#d45458" />
      <path d="M487 993L485 977 495 979z" fill="#dc4a4e" />
      <circle cx="498" cy="944" r="8" fill="#dcd45c" />
      <circle cx="496" cy="941" r="3" fill="#f0eca0" />
      <text x="505" y="897" fill="#5b7cdc">Z</text>
      <text x="576" y="965" fill="#4fa85a">Y</text>
      <text x="485" y="1007" fill="#dc5054">X</text>
    </g>
  )
}

function Viewport() {
  return (
    <main className="relative flex-1 overflow-hidden bg-linear-to-b from-[#dddddd] to-[#a9a9b2]">
      <svg className="absolute inset-0 h-full w-full" viewBox="424 185 1494 833" role="img" aria-label="Zahvat.a3d">
        <defs>
          <linearGradient id="rim" gradientUnits="userSpaceOnUse" x1="420" y1="100" x2="1190" y2="920">
            <stop offset="0" stopColor="#0090ff" />
            <stop offset=".06" stopColor="#0088f4" />
            <stop offset=".2" stopColor="#006cda" />
            <stop offset=".45" stopColor="#008aff" />
            <stop offset=".9" stopColor="#0090ff" />
            <stop offset="1" stopColor="#0078e8" />
          </linearGradient>
          <linearGradient id="groove" gradientUnits="userSpaceOnUse" x1="450" y1="220" x2="960" y2="930">
            <stop offset="0" stopColor="#0070dc" />
            <stop offset=".25" stopColor="#006ad0" />
            <stop offset=".5" stopColor="#0092ff" />
            <stop offset=".75" stopColor="#0070dc" />
            <stop offset=".9" stopColor="#0074e4" />
            <stop offset="1" stopColor="#0054a8" />
          </linearGradient>
          <linearGradient id="boreFill" gradientUnits="userSpaceOnUse" x1="450" y1="250" x2="980" y2="880">
            <stop offset="0" stopColor="#0080f8" />
            <stop offset=".5" stopColor="#008cff" />
            <stop offset=".8" stopColor="#0070e0" />
            <stop offset="1" stopColor="#0090ff" />
          </linearGradient>
          <linearGradient id="disc" x1="0" y1="1" x2="1" y2="0">
            <stop offset="0" stopColor="#0060c4" />
            <stop offset=".5" stopColor="#0074e4" />
            <stop offset="1" stopColor="#0084ff" />
          </linearGradient>
          <linearGradient id="yellow" x1="0" y1="1" x2="1" y2="0">
            <stop offset="0" stopColor="#a8a000" />
            <stop offset=".5" stopColor="#f0e800" />
            <stop offset="1" stopColor="#fff600" />
          </linearGradient>
          <linearGradient id="tooth" x1="0" y1="1" x2="1" y2="0">
            <stop offset="0" stopColor="#fff600" />
            <stop offset=".6" stopColor="#b4ac00" />
            <stop offset="1" stopColor="#fff600" />
          </linearGradient>
          <linearGradient id="hub" x1="0" y1="0" x2="1" y2="0">
            <stop offset="0" stopColor="#900000" />
            <stop offset="1" stopColor="#f00000" />
          </linearGradient>
          <linearGradient id="fork" x1="0" y1="0" x2="1" y2="0">
            <stop offset="0" stopColor="#78dc10" />
            <stop offset=".5" stopColor="#509c00" />
            <stop offset="1" stopColor="#62b808" />
          </linearGradient>
          <linearGradient id="green" x1="0" y1="0" x2=".1" y2="1">
            <stop offset="0" stopColor="#7cf000" />
            <stop offset=".4" stopColor="#b4ff38" />
            <stop offset=".7" stopColor="#84ff00" />
            <stop offset="1" stopColor="#7cf400" />
          </linearGradient>
        </defs>
        <g transform="translate(860 240) scale(.3333)" fill="none" stroke="#0a0a14" strokeWidth="2.600" strokeLinejoin="round">
          <Handwheel />
          <Bracket />
          <Gripper />
          <BevelGears />
          <RedFrame />
        </g>
        <AxisTriad />
      </svg>
      <ViewToolbar />
    </main>
  )
}

export default function App() {
  return (
    <div className="flex h-screen flex-col bg-[#dfe8f6] font-['Noto_Sans',sans-serif] text-sm text-[#2e2e2e]">
      <div className="mr-1 flex min-h-0 flex-1 flex-col border-2 border-black bg-[#f1f1f1]">
        <TitleBar />
        <DocumentTabs />
        <Ribbon />
        <div className="flex min-h-0 flex-1">
          <SideStrip />
          <TreePanel />
          <Viewport />
        </div>
      </div>
      <div className="flex h-[9px] justify-center bg-linear-to-r from-[#e4eef8] via-[#d8e2f6] to-[#e4ecf8] pl-[322px]">
        <span className="mt-[6px] h-[3px] w-12 rounded-t-sm bg-[#f4f7fc]" />
      </div>
    </div>
  )
}
